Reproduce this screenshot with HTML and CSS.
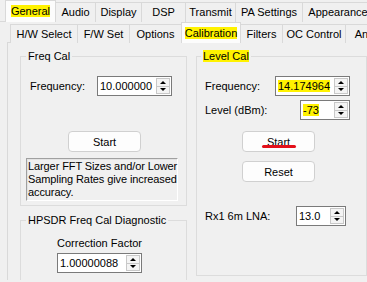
FILE: index.html
```html
<!DOCTYPE html>
<html lang="en">
  <head>
    <meta charset="UTF-8" />
    <title>Setup - Calibration</title>
    <link rel="stylesheet" href="styles.css">
  </head>

  <body>
    <div class="tabs top">
      <div class="tab sel t-general"><span class="hl">General</span></div>
      <div class="tab t-audio">Audio</div>
      <div class="tab t-display">Display</div>
      <div class="tab t-dsp">DSP</div>
      <div class="tab t-transmit">Transmit</div>
      <div class="tab t-pa">PA Settings</div>
      <div class="tab t-appearance">Appearance</div>
    </div>

    <div class="page outer">
      <div class="tabs sub">
        <div class="tab t-hw">H/W Select</div>
        <div class="tab t-fw">F/W Set</div>
        <div class="tab t-options">Options</div>
        <div class="tab sel t-cal"><span class="hl">Calibration</span></div>
        <div class="tab t-filters">Filters</div>
        <div class="tab t-oc">OC Control</div>
        <div class="tab t-ant">Ant</div>
      </div>

      <div class="page inner">
        <div class="cols">
          <div class="col">
            <fieldset class="group freqcal">
              <legend>Freq Cal</legend>
              <div class="row first">
                <span class="lbl w67">Frequency:</span>
                <div class="spin w75">
                  <span class="val">10.000000</span>
                  <span class="arrows"><i class="up"></i><i class="down"></i></span>
                </div>
              </div>
              <button class="btn freqstart">Start</button>
              <div class="note">
                Larger FFT Sizes and/or Lower<br />
                Sampling Rates give increased<br />
                accuracy.
              </div>
            </fieldset>

            <fieldset class="group diag">
              <legend>HPSDR Freq Cal Diagnostic</legend>
              <div class="corr">Correction Factor</div>
              <div class="spin w85 corrspin">
                <span class="val">1.00000088</span>
                <span class="arrows"><i class="up"></i><i class="down"></i></span>
              </div>
            </fieldset>
          </div>

          <fieldset class="group levelcal">
            <legend><span class="hl">Level Cal</span></legend>
            <div class="row first">
              <span class="lbl w70">Frequency:</span>
              <div class="spin w75">
                <span class="val"><span class="hl">14.174964</span></span>
                <span class="arrows"><i class="up"></i><i class="down"></i></span>
              </div>
            </div>
            <div class="row second">
              <span class="lbl w95">Level (dBm):</span>
              <div class="spin w50">
                <span class="val"><span class="hl">-73</span></span>
                <span class="arrows"><i class="up"></i><i class="down"></i></span>
              </div>
            </div>
            <button class="btn levelstart">Start<span class="mark"></span></button>
            <button class="btn reset">Reset</button>
            <div class="row lna">
              <span class="lbl w91">Rx1 6m LNA:</span>
              <div class="spin w50">
                <span class="val">13.0</span>
                <span class="arrows"><i class="up"></i><i class="down"></i></span>
              </div>
            </div>
          </fieldset>
        </div>
      </div>
    </div>
  </body>
</html>
```

FILE: styles.css
```css
body {
  margin: 0;
  background-color: #f0f0f0;
  font-family: "Liberation Sans", Arial, sans-serif;
  font-size: 11px;
  color: #000;
  overflow: hidden;
}

.hl {
  background-color: #fff200;
}

/* tab strips */

.tabs {
  display: flex;
  align-items: flex-end;
  white-space: nowrap;
}

.tabs.top {
  height: 22px;
  padding-left: 5px;
}

.tabs.sub {
  height: 21px;
  padding-left: 10px;
}

.tab {
  box-sizing: border-box;
  flex: none;
  height: 20px;
  line-height: 19px;
  margin-left: -1px;
  border: 1px solid #d9d9d9;
  border-bottom: none;
  background-color: #f0f0f0;
  text-align: center;
}

.tab:first-child {
  margin-left: 0;
}

.tabs.sub .tab {
  height: 19px;
  line-height: 18px;
}

.tab.sel,
.tabs.sub .tab.sel {
  position: relative;
  z-index: 1;
  height: 22px;
  line-height: 20px;
  background-color: #fcfcfc;
}

.tabs.sub .tab.sel {
  height: 21px;
}

.t-general { width: 51px; }
.t-audio { width: 41px; }
.t-display { width: 47px; }
.t-dsp { width: 45px; }
.t-transmit { width: 51px; }
.t-pa { width: 68px; }
.t-appearance { width: 72px; }

.t-hw { width: 68px; }
.t-fw { width: 53px; }
.t-options { width: 53px; }
.t-cal { width: 60px; }
.t-filters { width: 43px; }
.t-oc { width: 64px; }
.t-ant { width: 36px; }

.page {
  border-top: 1px solid #d9d9d9;
}

.page.outer {
  margin-top: -1px;
}

.page.inner {
  margin-top: -1px;
  margin-left: 7px;
  border-left: 1px solid #d9d9d9;
  padding: 7px 0 0 12px;
  height: 230px;
}

/* group boxes */

.cols {
  display: flex;
  gap: 9px;
  align-items: flex-start;
}

.col {
  display: flex;
  flex-direction: column;
}

.group {
  margin: 0;
  padding: 0;
  border: 1px solid #dcdcdc;
  min-width: 0;
}

.group legend {
  padding: 0 2px;
  margin-left: 5px;
  line-height: 13px;
}

.freqcal {
  width: 167px;
  height: 156px;
  box-sizing: border-box;
}

.diag {
  width: 167px;
  height: 70px;
  box-sizing: border-box;
  margin-top: 8px;
}

.levelcal {
  width: 190px;
  height: 226px;
  box-sizing: border-box;
}

.levelcal legend {
  margin-left: 4px;
  padding: 0 2px;
}

/* rows */

.row {
  display: flex;
  align-items: center;
  height: 20px;
}

.freqcal .row {
  padding-left: 9px;
}

.levelcal .row {
  padding-left: 8px;
}

.row.first {
  margin-top: 13px;
}

.row.second {
  margin-top: 4px;
}

.row.lna {
  margin-top: 24px;
}

.lbl {
  flex: none;
}

.w67 { width: 67px; }
.w70 { width: 70px; }
.w91 { width: 91px; }
.w95 { width: 95px; }

/* numeric up-down */

.spin {
  box-sizing: border-box;
  display: flex;
  height: 20px;
  border: 1px solid #7a7a7a;
  background-color: #fff;
}

.w50 { width: 50px; }
.w75 { width: 75px; }
.w85 { width: 85px; }

.spin .val {
  flex: 1;
  padding-left: 2px;
  line-height: 18px;
  overflow: hidden;
}

.arrows {
  box-sizing: border-box;
  display: flex;
  flex-direction: column;
  width: 14px;
  margin: 1px;
  border: 1px solid #c8c8c8;
  background-color: #f4f4f4;
}

.arrows i {
  flex: 1;
  display: flex;
  align-items: center;
  justify-content: center;
}

.arrows i + i {
  border-top: 1px solid #c8c8c8;
}

.arrows i::before {
  content: "";
  width: 0;
  height: 0;
  border-left: 3px solid transparent;
  border-right: 3px solid transparent;
}

.arrows .up::before {
  border-bottom: 3px solid #000;
}

.arrows .down::before {
  border-top: 3px solid #000;
}

/* buttons */

.btn {
  display: block;
  box-sizing: border-box;
  width: 73px;
  height: 21px;
  padding: 0;
  border: 1px solid #d0d0d0;
  border-radius: 4px;
  background-color: #fdfdfd;
  font: inherit;
  color: #000;
  text-align: center;
}

.freqstart {
  margin: 35px 0 0 47px;
}

.levelstart {
  position: relative;
  margin: 11px 0 0 45px;
}

.reset {
  margin: 9px 0 0 45px;
}

.mark {
  position: absolute;
  left: 19px;
  top: 13px;
  width: 34px;
  height: 3px;
  border-radius: 2px;
  background-color: #e3101a;
}

/* info label */

.note {
  box-sizing: border-box;
  width: 152px;
  margin: 6px 0 0 5px;
  padding: 1px 1px;
  line-height: 13px;
  white-space: nowrap;
  letter-spacing: -0.1px;
  border: 1px solid;
  border-color: #a0a0a0 #ffffff #ffffff #a0a0a0;
  box-shadow: inset 1px 1px 0 #e3e3e3;
}

.corr {
  margin: 10px 0 0 36px;
  line-height: 13px;
}

.corrspin {
  margin: 3px 0 0 36px;
}
```
